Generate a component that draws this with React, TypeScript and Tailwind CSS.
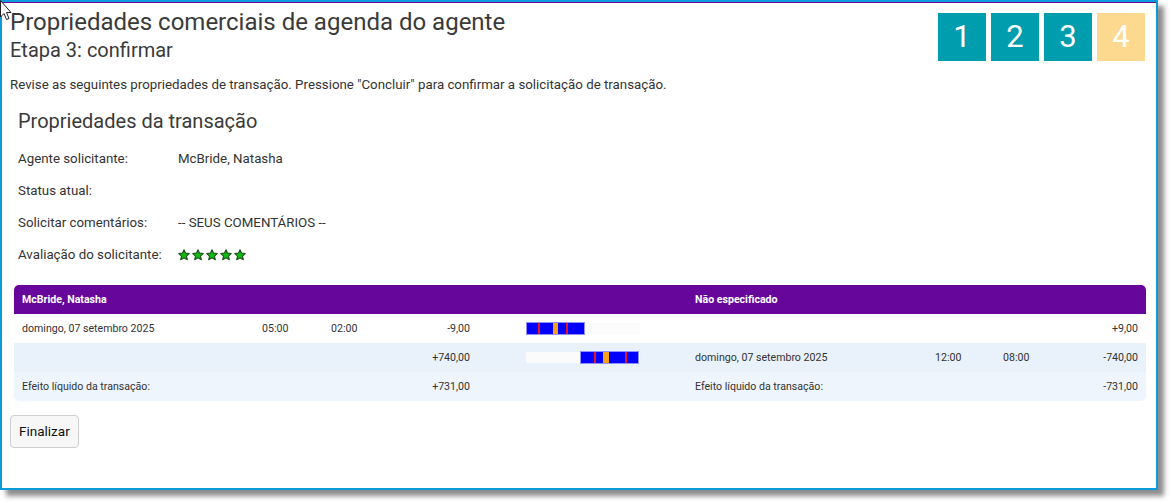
import React from "react";

const Stars = () => (
  <div className="flex items-center gap-[2px]">
    {[0, 1, 2, 3, 4].map((i) => (
      <svg key={i} width="12" height="12" viewBox="0 0 24 24">
        <path
          d="M12 1.5l3.1 6.8 7.4.8-5.5 5 1.6 7.3L12 17.7l-6.6 3.7 1.6-7.3-5.5-5 7.4-.8z"
          fill="#0fbf0f"
          stroke="#1d4d1d"
          strokeWidth="2.2"
          strokeLinejoin="round"
        />
      </svg>
    ))}
  </div>
);

type Seg = [string, number];

const Bar = ({ offset, segs }: { offset: number; segs: Seg[] }) => (
  <div className="flex h-[11px] w-[114px] bg-[#fbfbfb]">
    <div style={{ width: offset }} />
    <div className="flex h-full outline outline-1 outline-[#8f8fff]">
      {segs.map(([c, w], i) => (
        <div key={i} style={{ width: w, background: c }} />
      ))}
    </div>
  </div>
);

const B = "#0000ff";
const R = "#e8102a";
const O = "#f7a21b";

const bar1: Seg[] = [[B, 11], [R, 2], [B, 13], [O, 5], [B, 8], [R, 2], [B, 16]];
const bar2: Seg[] = [[B, 13], [R, 2], [B, 7], [O, 6], [B, 16], [R, 2], [B, 11]];

const Half = ({
  date,
  t1,
  t2,
  amount,
  right,
}: {
  date?: string;
  t1?: string;
  t2?: string;
  amount?: string;
  right?: boolean;
}) => (
  <div className={"flex items-center " + (right ? "w-[459px] pl-[8px] pr-[8px]" : "w-[456px] pl-[8px]")}>
    <div className="w-[240px]">{date}</div>
    <div className={right ? "w-[68px]" : "w-[69px]"}>{t1}</div>
    <div className="w-[60px]">{t2}</div>
    <div className="flex-1 text-right">{amount}</div>
  </div>
);

const Row = ({ label, value }: { label: string; value: React.ReactNode }) => (
  <div className="flex items-center h-[32px] text-[13.3px]">
    <div className="w-[160px]">{label}</div>
    <div>{value}</div>
  </div>
);

export default function App() {
  return (
    <div className="w-[1171px] h-[504px] bg-white relative" style={{ fontFamily: "Roboto, 'Liberation Sans', sans-serif" }}>
      <div className="w-[1158px] h-[490px] border-2 border-[#0b9bd8] shadow-[6px_6px_5px_rgba(0,0,0,0.45)] bg-white text-[#333]">
        <div className="h-full border-t border-[#6a0aa5] pl-[8px] pr-[11px]">
          <div className="flex justify-between items-start">
            <div>
              <h1 className="text-[24px] leading-[28px] mt-[5px] text-[#3a3a3a]">
                Propriedades comerciais de agenda do agente
              </h1>
              <h2 className="text-[20px] leading-[24px] mt-[2px] text-[#3a3a3a]">Etapa 3: confirmar</h2>
            </div>
            <div className="flex gap-[5px] mt-[10px]">
              {["1", "2", "3"].map((n) => (
                <div key={n} className="w-[48px] h-[48px] bg-[#009daf] text-white text-[31px] flex items-center justify-center">
                  {n}
                </div>
              ))}
              <div className="w-[48px] h-[48px] bg-[#fdd98f] text-white text-[31px] flex items-center justify-center">4</div>
            </div>
          </div>
          <p className="text-[13.3px] mt-[14px] leading-[18px]">
            Revise as seguintes propriedades de transação. Pressione "Concluir" para confirmar a solicitação de transação.
          </p>
          <div className="pl-[8px]">
            <h3 className="text-[20px] leading-[24px] mt-[15px] mb-[10px] text-[#3a3a3a]">Propriedades da transação</h3>
            <Row label="Agente solicitante:" value="McBride, Natasha" />
            <Row label="Status atual:" value="" />
            <Row label="Solicitar comentários:" value="-- SEUS COMENTÁRIOS --" />
            <Row label="Avaliação do solicitante:" value={<Stars />} />
          </div>
          <div className="ml-[4px] mt-[14px] w-[1132px] text-[10.6px] rounded-[5px] overflow-hidden">
            <div className="flex h-[29px] items-center bg-[#66069b] text-white font-bold">
              <div className="w-[673px] pl-[8px]">McBride, Natasha</div>
              <div className="pl-[8px]">Não especificado</div>
            </div>
            <div className="flex h-[29px] items-center bg-white">
              <Half date="domingo, 07 setembro 2025" t1="05:00" t2="02:00" amount="-9,00" />
              <div className="w-[56px]" />
              <Bar offset={1} segs={bar1} />
              <div className="w-[47px]" />
              <Half right amount="+9,00" />
            </div>
            <div className="flex h-[29px] items-center bg-[#e9f1fa]">
              <Half amount="+740,00" />
              <div className="w-[56px]" />
              <Bar offset={55} segs={bar2} />
              <div className="w-[47px]" />
              <Half right date="domingo, 07 setembro 2025" t1="12:00" t2="08:00" amount="-740,00" />
            </div>
            <div className="flex h-[29px] items-center bg-[#eef5fc]">
              <Half date="Efeito líquido da transação:" amount="+731,00" />
              <div className="w-[217px]" />
              <Half right date="Efeito líquido da transação:" amount="-731,00" />
            </div>
          </div>
          <button className="mt-[14px] h-[33px] px-[8px] border border-[#cfcfcf] rounded-[4px] bg-[#f7f7f7] text-[13.5px] text-[#111]">
            Finalizar
          </button>
        </div>
      </div>
      <svg className="absolute left-0 top-0" width="12" height="22" viewBox="0 0 12 22">
        <path d="M0.5 0.5 L0.5 17 L4 13.5 L6.5 19.5 L9 18.5 L6.5 12.5 L11 12.5 Z" fill="white" stroke="#222" strokeWidth="1" />
      </svg>
    </div>
  );
}
